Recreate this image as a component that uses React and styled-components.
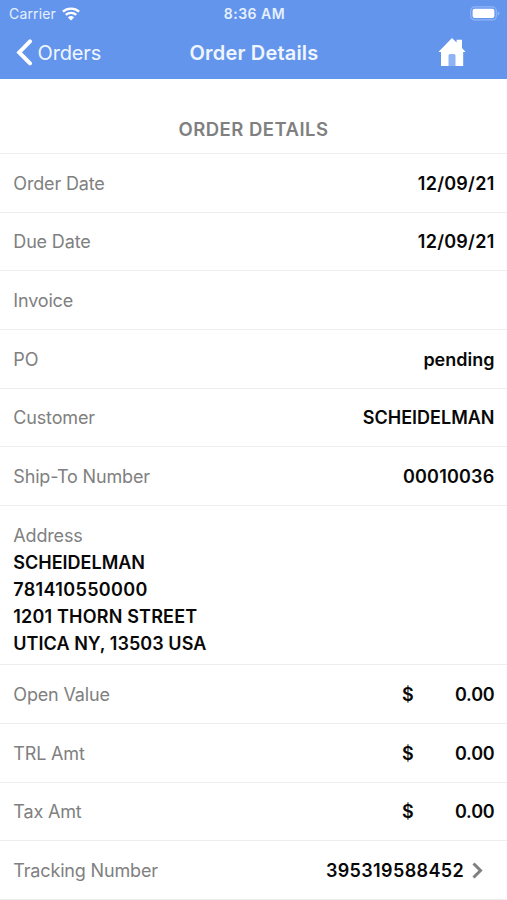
import React from "react";
import styled, { createGlobalStyle } from "styled-components";

const GlobalStyle = createGlobalStyle`
  * {
    box-sizing: border-box;
  }

  body {
    margin: 0;
    background: #fff;
    font-family: Inter, "Liberation Sans", sans-serif;
    overflow: hidden;
  }
`;

const Screen = styled.div`
  height: 900px;
  overflow: hidden;
  background: #fff;
`;

const Header = styled.header`
  height: 79.3px;
  background: #6495ed;
  color: #fff;
`;

const StatusBar = styled.div`
  display: grid;
  grid-template-columns: 1fr auto 1fr;
  align-items: center;
  height: 27px;
  padding: 0 7px 0 9px;
  font-size: 14px;
`;

const Carrier = styled.div`
  display: flex;
  align-items: center;
  gap: 6px;
  color: #e6f0ff;
  letter-spacing: 0.15px;
`;

const Clock = styled.div`
  color: #e6f0ff;
  font-weight: 600;
  letter-spacing: 0.5px;
`;

const BatteryIcon = styled.svg`
  justify-self: end;
`;

const NavBar = styled.nav`
  display: grid;
  grid-template-columns: 1fr auto 1fr;
  align-items: center;
  height: 51px;
  padding: 0 41px 0 16px;
`;

const BackButton = styled.div`
  display: flex;
  align-items: center;
  gap: 4.5px;
  color: #f0f6ff;
  font-size: 20px;
  letter-spacing: -0.15px;
`;

const NavTitle = styled.div`
  margin-left: 26px;
  color: #f0f6ff;
  font-size: 20px;
  font-weight: 600;
  letter-spacing: 0.18px;
`;

const HomeIcon = styled.svg`
  justify-self: end;
  margin-bottom: 1px;
`;

const SectionTitle = styled.h1`
  height: 74.7px;
  margin: 0;
  padding-top: 38px;
  border-bottom: 1.4px solid #eeeeef;
  color: #808080;
  font-size: 18.5px;
  font-weight: 600;
  line-height: 24px;
  letter-spacing: 0.48px;
  text-align: center;
`;

const Row = styled.div`
  display: flex;
  align-items: center;
  justify-content: space-between;
  height: 58.67px;
  padding: 0.8px ${props => (props.$linked ? "24px" : "12.5px")} 0 13.3px;
  border-bottom: 1.4px solid #eeeeef;
`;

const AddressBlock = styled.div`
  height: 159.3px;
  padding: 16px 13.3px 0;
  border-bottom: 1.4px solid #eeeeef;
`;

const Label = styled.div`
  color: #808080;
  font-size: 18px;
  line-height: 27px;
  letter-spacing: -0.16px;
`;

const Value = styled.div`
  color: #080808;
  font-size: 18px;
  font-weight: 600;
  line-height: 27px;
  letter-spacing: ${props => props.$tracking || 0}px;
`;

const Amount = styled.div`
  display: flex;
  justify-content: space-between;
  width: 92.5px;
`;

const LinkValue = styled.div`
  display: flex;
  align-items: center;
  gap: 8px;
`;

const orderRows = [
  { label: "Order Date", value: "12/09/21", tracking: 0.25 },
  { label: "Due Date", value: "12/09/21", tracking: 0.25 },
  { label: "Invoice", value: "" },
  { label: "PO", value: "pending" },
  { label: "Customer", value: "SCHEIDELMAN" },
  { label: "Ship-To Number", value: "00010036", tracking: 0.2 }
];

const addressLines = [
  { text: "SCHEIDELMAN", tracking: 0 },
  { text: "781410550000", tracking: 0.34 },
  { text: "1201 THORN STREET", tracking: 0.18 },
  { text: "UTICA NY, 13503 USA", tracking: 0.05 }
];

const amountRows = [
  { label: "Open Value", value: "0.00" },
  { label: "TRL Amt", value: "0.00" },
  { label: "Tax Amt", value: "0.00" }
];

function Wifi() {
  return (
    <svg width="18" height="14" viewBox="0 0 18 14" fill="none">
      <path
        d="M.9 4.7C5.3.6 12.7.6 17.1 4.7M3.8 7.9c2.9-2.7 7.5-2.7 10.4 0"
        stroke="#fff"
        strokeWidth="2.4"
      />
      <path d="M5.9 10.4a4.6 4.6 0 0 1 6.2 0L9 13.6z" fill="#fff" />
    </svg>
  );
}

function Battery() {
  return (
    <BatteryIcon width="30" height="15" viewBox="0 0 30 15" fill="none">
      <rect x="0.7" y="0.9" width="25.6" height="13" rx="4" stroke="#8fb5f8" strokeWidth="1.2" />
      <rect x="2.6" y="2.8" width="21.8" height="9.2" rx="2" fill="#fff" />
      <path d="M27.7 5.2c2.3 1 2.3 3.4 0 4.4z" fill="#8fb5f8" />
    </BatteryIcon>
  );
}

function Home() {
  return (
    <HomeIcon width="28" height="28" viewBox="0 0 28 28">
      <path
        d="M14 0 18.6 4.6V1.8H24v8.2l3.6 4.1h-2.4V28H3V14.1H.4z"
        fill="#fff"
      />
      <path d="M10.5 28V17.5q0-1.6 1.6-1.6h3.8q1.6 0 1.6 1.6V28z" fill="#8fb3f4" />
    </HomeIcon>
  );
}

export default function App() {
  return (
    <Screen>
      <GlobalStyle />
      <Header>
        <StatusBar>
          <Carrier>
            Carrier
            <Wifi />
          </Carrier>
          <Clock>8:36 AM</Clock>
          <Battery />
        </StatusBar>
        <NavBar>
          <BackButton>
            <svg width="17" height="27" viewBox="0 0 17 27" fill="none">
              <path
                d="M14 2.4 3.2 13.4 14 24.4"
                stroke="#fff"
                strokeWidth="4"
                strokeLinecap="round"
              />
            </svg>
            Orders
          </BackButton>
          <NavTitle>Order Details</NavTitle>
          <Home />
        </NavBar>
      </Header>

      <SectionTitle>ORDER DETAILS</SectionTitle>
      {orderRows.map(row => (
        <Row key={row.label}>
          <Label>{row.label}</Label>
          <Value $tracking={row.tracking}>{row.value}</Value>
        </Row>
      ))}
      <AddressBlock>
        <Label>Address</Label>
        {addressLines.map(line => (
          <Value key={line.text} $tracking={line.tracking}>
            {line.text}
          </Value>
        ))}
      </AddressBlock>
      {amountRows.map(row => (
        <Row key={row.label}>
          <Label>{row.label}</Label>
          <Amount>
            <Value>$</Value>
            <Value $tracking={-0.2}>{row.value}</Value>
          </Amount>
        </Row>
      ))}
      <Row $linked>
        <Label>Tracking Number</Label>
        <LinkValue>
          <Value $tracking={0.36}>395319588452</Value>
          <svg width="11" height="17" viewBox="0 0 11 17" fill="none">
            <path d="m1.5 1.5 7 7-7 7" stroke="#808080" strokeWidth="3" />
          </svg>
        </LinkValue>
      </Row>
    </Screen>
  );
}
